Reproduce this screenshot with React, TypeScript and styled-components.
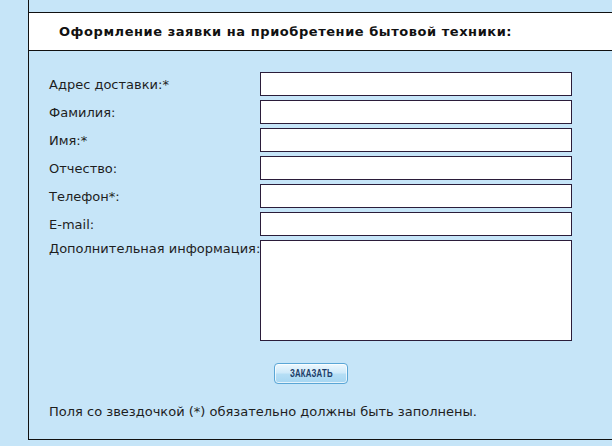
import { Fragment } from 'react';
import styled, { createGlobalStyle } from 'styled-components';

const GlobalStyle = createGlobalStyle`
  html, body { margin: 0; padding: 0; background: #c6e5f8; }
  body { font-family: "DejaVu Sans", Verdana, sans-serif; color: #1e1e1e; }
`;

const Page = styled.div`
  padding-left: 28px;
  overflow: hidden;
  width: 612px;
  height: 446px;
  box-sizing: border-box;
`;

const Panel = styled.div`
  width: 640px;
  height: 441px;
  box-sizing: border-box;
  border: 1px solid #111;
  border-right: none;
  margin-top: -1px;
  padding-top: 12px;
  display: flex;
  flex-direction: column;
`;

const Header = styled.div`
  height: 39px;
  box-sizing: border-box;
  margin-left: -1px;
  background: #fff;
  border-top: 1px solid #111;
  border-bottom: 1px solid #111;
  border-left: 1px solid #111;
  padding-left: 30px;
  display: flex;
  align-items: center;
  font-size: 13px;
  font-weight: bold;
  letter-spacing: 0.55px;
  color: #111;
`;

const Form = styled.form`
  display: grid;
  grid-template-columns: 211px 312px;
  row-gap: 4px;
  padding: 21px 0 0 20px;
`;

const Label = styled.label<{ $top?: boolean }>`
  font-size: 13px;
  align-self: ${(p) => (p.$top ? 'start' : 'center')};
  padding-top: ${(p) => (p.$top ? '1px' : '0')};
  white-space: nowrap;
`;

const Field = styled.input`
  height: 24px;
  box-sizing: border-box;
  border: 1px solid #2b1d3a;
  background: #fff;
  margin: 0;
  padding: 2px 4px;
  font: inherit;
`;

const Area = styled.textarea`
  height: 101px;
  box-sizing: border-box;
  border: 1px solid #2b1d3a;
  background: #fff;
  margin: 0;
  resize: none;
  font: inherit;
`;

const ButtonCell = styled.div`
  grid-column: 2;
  padding: 18px 0 0 14px;
`;

const OrderButton = styled.button`
  width: 74px;
  height: 21px;
  padding: 0;
  border: 1px solid #5aa6d6;
  border-radius: 4px;
  background: linear-gradient(#eef8fe 0%, #cfeafa 45%, #b5def5 55%, #a6d6f2 100%);
  box-shadow: inset 0 0 0 1px rgba(255, 255, 255, 0.7);
  display: flex;
  align-items: center;
  justify-content: center;
  cursor: pointer;
`;

const ButtonText = styled.span`
  display: inline-block;
  font-family: "Liberation Sans", Arial, sans-serif;
  font-size: 10px;
  font-weight: bold;
  color: #1c3c66;
  transform: scaleX(0.78);
  letter-spacing: 0.2px;
`;

const Note = styled.p`
  margin: 20px 0 0 20px;
  font-size: 13px;
`;

const fields = [
  'Адрес доставки:*',
  'Фамилия:',
  'Имя:*',
  'Отчество:',
  'Телефон*:',
  'E-mail:',
];

export default function App() {
  return (
    <>
      <GlobalStyle />
      <Page>
        <Panel>
          <Header>Оформление заявки на приобретение бытовой техники:</Header>
          <Form onSubmit={(e) => e.preventDefault()}>
            {fields.map((f) => (
              <Fragment key={f}>
                <Label>{f}</Label>
                <Field type="text" />
              </Fragment>
            ))}
            <Label $top>Дополнительная информация:</Label>
            <Area />
            <ButtonCell>
              <OrderButton type="submit">
                <ButtonText>ЗАКАЗАТЬ</ButtonText>
              </OrderButton>
            </ButtonCell>
          </Form>
          <Note>Поля со звездочкой (*) обязательно должны быть заполнены.</Note>
        </Panel>
      </Page>
    </>
  );
}
